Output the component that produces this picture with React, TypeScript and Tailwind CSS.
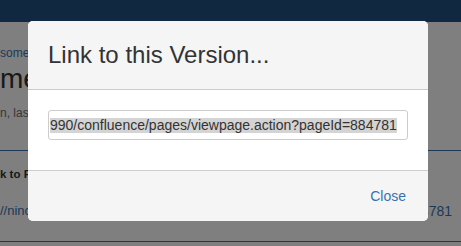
import React from "react";

const url = "990/confluence/pages/viewpage.action?pageId=884781";

export default function App() {
  return (
    <div className="relative w-[461px] h-[246px] overflow-hidden bg-white font-['Liberation_Sans',Arial,sans-serif]">
      {/* page underneath, mostly covered by the dialog */}
      <div className="h-[22px] bg-[#205081]" />
      <div className="whitespace-nowrap">
        <div className="mt-[23px] text-[12px] leading-[16px] text-[#3b73af]">some</div>
        <div className="mt-[2px] text-[28px] leading-[32px] text-[#333]">me</div>
        <div className="mt-[10px] text-[12px] leading-[16px] text-[#707070]">n, las</div>
        <div className="mt-[29px] h-px bg-[#3b73af]" />
        <div className="mt-[15px] text-[11.5px] leading-[16px] font-bold text-[#333]">k to F</div>
        <div className="mt-[20px] flex justify-between pr-[9px] text-[14px] leading-[18px] text-[#3b73af]">
          <span className="text-[13px]">//ninc</span>
          <span>4781</span>
        </div>
        <div className="mt-[21px] h-px bg-[#3b73af]" />
      </div>

      {/* blanket */}
      <div className="absolute inset-0 bg-black/50" />

      {/* dialog */}
      <div className="absolute left-[28px] top-[21px] w-[400px] rounded-[5px] overflow-hidden bg-white">
        <div className="h-[69px] flex items-center px-5 bg-[#f5f5f5] border-b border-[#cccccc]">
          <h2 className="text-[24px] leading-[28px] text-[#333]">Link to this Version...</h2>
        </div>
        <div className="h-[80px] px-5 pt-5">
          <div className="h-[30px] w-[360px] flex items-center overflow-hidden whitespace-nowrap rounded-[3px] border border-[#cccccc] px-px">
            <span className="bg-[#d4d4d4] text-[14px] leading-[15px] text-[#333]">{url}</span>
          </div>
        </div>
        <div className="h-[51px] flex items-center justify-end pr-[22px] bg-[#f5f5f5] border-t border-[#cccccc]">
          <a className="text-[14px] text-[#3572b0] cursor-pointer">Close</a>
        </div>
      </div>
    </div>
  );
}
